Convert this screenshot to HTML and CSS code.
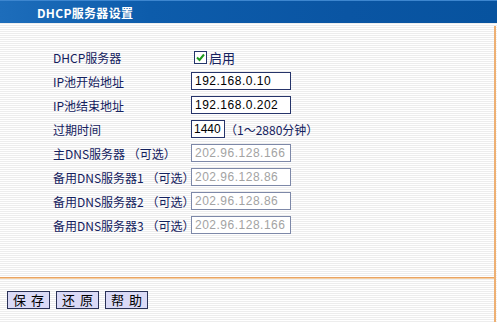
FILE: index.html
```html
<!DOCTYPE html>
<html lang="zh-CN">
<head>
<meta charset="utf-8">
<title>DHCP服务器设置</title>
<link rel="stylesheet" href="styles.css">
</head>
<body>
<div class="page">
  <div class="header"><span class="title">DHCP服务器设置</span></div>
  <div class="frame">
    <div class="form">
      <div class="label">DHCP服务器</div>
      <div class="field">
        <span class="check"><svg width="11" height="11" viewBox="0 0 11 11"><path d="M2 5.5 L4.5 8 L9 2.5" fill="none" stroke="#1d9a1d" stroke-width="2"/></svg></span><span class="checklabel">启用</span>
      </div>
      <div class="label">IP池开始地址</div>
      <div class="field"><input class="box" type="text" value="192.168.0.10"></div>
      <div class="label">IP池结束地址</div>
      <div class="field"><input class="box" type="text" value="192.168.0.202"></div>
      <div class="label">过期时间</div>
      <div class="field"><input class="box short" type="text" value="1440"><span class="hint">（1～2880分钟）</span></div>
      <div class="label">主DNS服务器 （可选）</div>
      <div class="field"><input class="box muted" type="text" value="202.96.128.166" readonly></div>
      <div class="label">备用DNS服务器1 （可选）</div>
      <div class="field"><input class="box muted" type="text" value="202.96.128.86" readonly></div>
      <div class="label">备用DNS服务器2 （可选）</div>
      <div class="field"><input class="box muted" type="text" value="202.96.128.86" readonly></div>
      <div class="label">备用DNS服务器3 （可选）</div>
      <div class="field"><input class="box muted" type="text" value="202.96.128.166" readonly></div>
    </div>
    <div class="rule"></div>
    <div class="actions">
      <button class="btn" type="button">保 存</button>
      <button class="btn" type="button">还 原</button>
      <button class="btn" type="button">帮 助</button>
    </div>
  </div>
</div>
</body>
</html>
```
FILE: styles.css
```css
html, body {
  margin: 0;
  padding: 0;
}
body {
  width: 497px;
  height: 322px;
  overflow: hidden;
  font-family: "Noto Sans CJK SC", "Liberation Sans", sans-serif;
  font-size: 12px;
  color: #14215e;
  background: repeating-linear-gradient(to bottom, #ffffff 0, #ffffff 1px, #ededed 1px, #ededed 2px);
}
.page {
  display: flex;
  flex-direction: column;
  height: 322px;
}
.header {
  height: 22px;
  display: flex;
  align-items: center;
  padding-left: 37px;
  border-top: 1px solid #3d86cf;
  background: linear-gradient(to right, #1d6dbb 0, #0d5cab 30%, #0a55a3 70%, #07539f 100%);
}
.title {
  color: #ffffff;
  font-weight: bold;
  font-size: 12px;
  letter-spacing: 0.3px;
}
.frame {
  margin-top: 3px;
  width: 494px;
  flex: 1;
  border-right: 2px solid #eeb073;
  display: flex;
  flex-direction: column;
}
.form {
  display: grid;
  grid-template-columns: 138px auto;
  grid-auto-rows: 24px;
  padding-top: 19px;
  padding-left: 53px;
}
.label {
  display: flex;
  align-items: center;
  white-space: nowrap;
}
.field {
  display: flex;
  align-items: center;
}
.check {
  width: 11px;
  height: 11px;
  margin-left: 3px;
  border: 1px solid #24356b;
  background: #ffffff;
  display: inline-flex;
}
.checklabel {
  margin-left: 2px;
  font-size: 13px;
}
.box {
  box-sizing: border-box;
  width: 100px;
  height: 18px;
  margin: 0;
  padding: 0 3px;
  border: 1px solid #26346a;
  background: #ffffff;
  font-family: "Liberation Sans", Arial, sans-serif;
  font-size: 12px;
  letter-spacing: 0.5px;
  color: #000000;
  outline: none;
}
.box.short {
  width: 34px;
  letter-spacing: 0;
  padding: 0 2px;
}
.box.muted {
  color: #a3a3a3;
  border-color: #7d88a8;
}
.hint {
  margin-left: 0;
  font-size: 12px;
}
.rule {
  margin-top: 40px;
  height: 1px;
  border-bottom: 1px solid #f6d0a4;
  background: #e9a463;
}
.actions {
  display: flex;
  gap: 6px;
  padding-left: 7px;
  margin-top: 12px;
}
.btn {
  box-sizing: border-box;
  width: 43px;
  height: 18px;
  margin: 0;
  padding: 0;
  border: 1px solid #2a3257;
  background: #dadaf6;
  font-family: "Noto Sans CJK SC", sans-serif;
  font-size: 13px;
  line-height: 16px;
  word-spacing: 2px;
  color: #000000;
}
```
